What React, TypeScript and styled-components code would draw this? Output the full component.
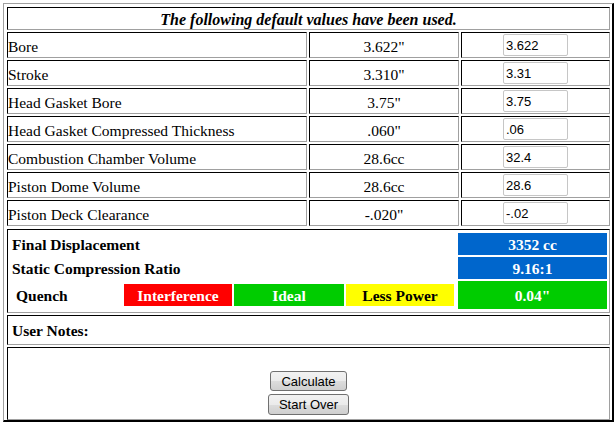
import styled, { createGlobalStyle } from "styled-components";

const GlobalStyle = createGlobalStyle`
  body {
    margin: 0;
    background: #fff;
    color: #000;
    font-family: "Liberation Serif", "Times New Roman", serif;
  }
`;

const Frame = styled.div`
  box-sizing: border-box;
  width: 611px;
  margin: 3px 0 0 3px;
  padding: 3px 2px 0 3px;
  border-top: 1px solid #a0a0a0;
  border-left: 1px solid #a0a0a0;
  border-right: 2px solid #000;
  border-bottom: 2px solid #000;
  display: flex;
  flex-direction: column;
  gap: 2px;
  font-size: 15.5px;
`;

const Cell = styled.div<{ $align?: string; $drop?: number }>`
  box-sizing: border-box;
  border-style: solid;
  border-width: 1px;
  border-color: #000 #a0a0a0 #a0a0a0 #000;
  display: flex;
  align-items: center;
  justify-content: ${(p) => p.$align ?? "flex-start"};
  padding-top: ${(p) => p.$drop ?? 0}px;
  line-height: 18px;
`;

const Title = styled(Cell)`
  height: 23px;
  font-size: 16px;
  font-weight: bold;
  font-style: italic;
`;

const Row = styled.div`
  display: grid;
  grid-template-columns: 300px 150px 149px;
  column-gap: 2px;
  height: 26px;
`;

const NumberInput = styled.input`
  box-sizing: border-box;
  width: 65px;
  height: 22px;
  padding: 0 2px;
  border: 1px solid #c6c6c6;
  border-radius: 2px;
  font-family: "Liberation Sans", Arial, sans-serif;
  font-size: 13px;
  color: #000;
  outline: none;
`;

const Results = styled(Cell)`
  height: 84px;
  margin-top: 1px;
  display: grid;
  grid-template-columns: 1fr 149px;
  grid-template-rows: 22px 22px 28px;
  column-gap: 4px;
  row-gap: 2px;
  padding: 3px 2px 3px 3px;
  align-items: stretch;
  font-weight: bold;
`;

const Label = styled.div`
  display: flex;
  align-items: center;
  padding-top: 2px;
  padding-left: 1px;
`;

const QuenchRow = styled.div`
  display: flex;
  align-items: center;
  gap: 2px;
`;

const QuenchLabel = styled.span`
  flex: 1;
  padding-left: 5px;
  padding-top: 2px;
`;

const Swatch = styled.div<{ $bg: string; $fg?: string; $w: number }>`
  box-sizing: border-box;
  width: ${(p) => p.$w}px;
  height: 22px;
  padding-top: 2px;
  display: flex;
  align-items: center;
  justify-content: center;
  background: ${(p) => p.$bg};
  color: ${(p) => p.$fg ?? "#fff"};
`;

const Readout = styled.div<{ $bg: string }>`
  display: flex;
  align-items: center;
  justify-content: center;
  padding-top: 2px;
  background: ${(p) => p.$bg};
  color: #fff;
`;

const Notes = styled(Cell)`
  height: 30px;
  padding-left: 4px;
  font-weight: bold;
`;

const Actions = styled(Cell)`
  height: 73px;
  flex-direction: column;
  justify-content: flex-start;
  padding-top: 23px;
  gap: 3px;
`;

const Button = styled.button<{ $h: number }>`
  height: ${(p) => p.$h}px;
  padding: 0 10px;
  border: 1px solid #707070;
  border-radius: 3px;
  background: linear-gradient(#f2f2f2 0%, #ebebeb 50%, #dddddd 51%, #cfcfcf 100%);
  font-family: "Liberation Sans", Arial, sans-serif;
  font-size: 13px;
  color: #000;
  cursor: pointer;
`;

const rows = [
  ["Bore", '3.622"', "3.622"],
  ["Stroke", '3.310"', "3.31"],
  ["Head Gasket Bore", '3.75"', "3.75"],
  ["Head Gasket Compressed Thickness", '.060"', ".06"],
  ["Combustion Chamber Volume", "28.6cc", "32.4"],
  ["Piston Dome Volume", "28.6cc", "28.6"],
  ["Piston Deck Clearance", '-.020"', "-.02"],
];

export default function App() {
  return (
    <>
      <GlobalStyle />
      <Frame>
        <Title $align="center" $drop={2}>
          The following default values have been used.
        </Title>
        {rows.map(([label, def, val]) => (
          <Row key={label}>
            <Cell $drop={3}>{label}</Cell>
            <Cell $align="center" $drop={3}>
              {def}
            </Cell>
            <Cell $align="center">
              <NumberInput defaultValue={val} />
            </Cell>
          </Row>
        ))}
        <Results>
          <Label>Final Displacement</Label>
          <Readout $bg="#0066cc">3352 cc</Readout>
          <Label>Static Compression Ratio</Label>
          <Readout $bg="#0066cc">9.16:1</Readout>
          <QuenchRow>
            <QuenchLabel>Quench</QuenchLabel>
            <Swatch $bg="#ff0000" $w={108}>
              Interference
            </Swatch>
            <Swatch $bg="#00cc00" $w={110}>
              Ideal
            </Swatch>
            <Swatch $bg="#ffff00" $fg="#000" $w={108}>
              Less Power
            </Swatch>
          </QuenchRow>
          <Readout $bg="#00cc00">0.04"</Readout>
        </Results>
        <Notes $drop={2}>User Notes:</Notes>
        <Actions>
          <Button $h={20}>Calculate</Button>
          <Button $h={21}>Start Over</Button>
        </Actions>
      </Frame>
    </>
  );
}
